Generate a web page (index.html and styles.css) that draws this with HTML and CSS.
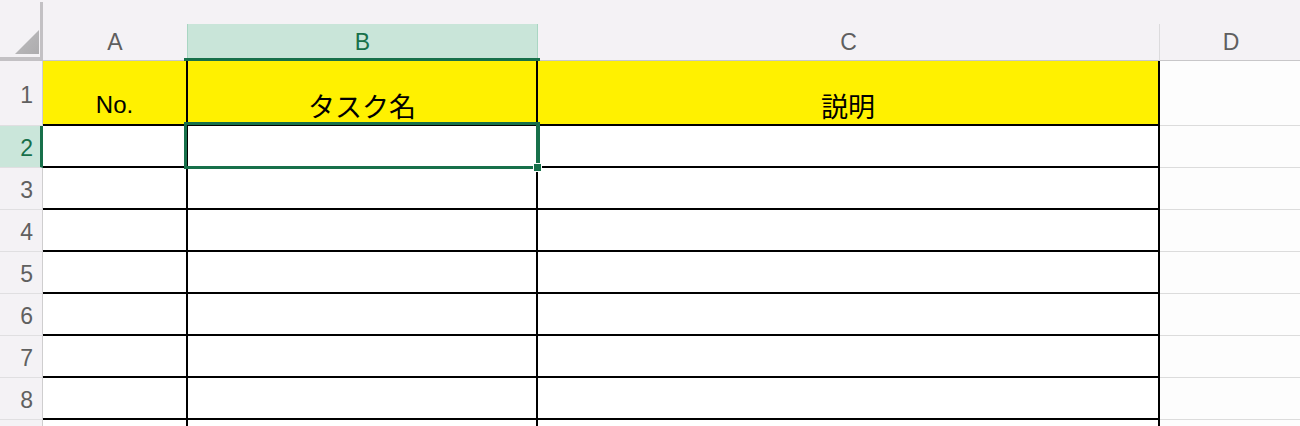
FILE: index.html
```html
<!DOCTYPE html>
<html lang="ja">
<head>
<meta charset="utf-8">
<title>Sheet</title>
<link rel="stylesheet" href="styles.css">
</head>
<body>
<div class="sheet">
  <div class="corner"><div class="tri"></div></div>
  <div class="ch">A</div>
  <div class="ch sel">B</div>
  <div class="ch">C</div>
  <div class="ch">D</div>

  <div class="rh">1</div>
  <div class="c yel"><span class="lat">No.</span></div>
  <div class="c yel"><span class="jp">タスク名</span></div>
  <div class="c yel"><span class="jp">説明</span></div>
  <div class="d"></div>

  <div class="rh sel">2</div>
  <div class="c"></div>
  <div class="c active"><div class="selbox"></div><div class="handle"></div></div>
  <div class="c"></div>
  <div class="d"></div>

  <div class="rh">3</div>
  <div class="c"></div><div class="c"></div><div class="c"></div><div class="d"></div>
  <div class="rh">4</div>
  <div class="c"></div><div class="c"></div><div class="c"></div><div class="d"></div>
  <div class="rh">5</div>
  <div class="c"></div><div class="c"></div><div class="c"></div><div class="d"></div>
  <div class="rh">6</div>
  <div class="c"></div><div class="c"></div><div class="c"></div><div class="d"></div>
  <div class="rh">7</div>
  <div class="c"></div><div class="c"></div><div class="c"></div><div class="d"></div>
  <div class="rh">8</div>
  <div class="c"></div><div class="c"></div><div class="c"></div><div class="d"></div>
  <div class="rh"></div>
  <div class="c"></div><div class="c"></div><div class="c"></div><div class="d"></div>
</div>
</body>
</html>
```
FILE: styles.css
```css
html, body {
  margin: 0;
  padding: 0;
  width: 1300px;
  height: 426px;
  overflow: hidden;
  background: #f4f2f5;
}

.sheet {
  display: grid;
  grid-template-columns: 43px 145px 350px 622px 143px;
  grid-template-rows: 61px 65px repeat(8, 42px);
  font-family: "Liberation Sans", "Noto Sans CJK JP", sans-serif;
}

/* corner */
.corner {
  margin-top: 2px;
  border-right: 3px solid #c3c1c4;
  border-bottom: 4px solid #c3c1c4;
  display: flex;
  align-items: flex-end;
  justify-content: flex-end;
  padding: 0 1px 3px 0;
}
.tri {
  width: 24px;
  height: 24px;
  background: linear-gradient(135deg, #e6e5e7 0%, #b6b5b7 45%, #adacae 100%);
  clip-path: polygon(100% 0, 100% 100%, 0 100%);
}

/* column headers */
.ch {
  margin-top: 24px;
  border-right: 1px solid #dcdbdd;
  border-bottom: 1px solid #c8c7c9;
  display: flex;
  align-items: center;
  justify-content: center;
  font-size: 23px;
  color: #5f5f5f;
  position: relative;
}
.ch.sel {
  background: #c9e5d9;
  color: #17704a;
  border-bottom: 0;
  border-right-color: #a9d6c3;
  box-shadow: -1px 0 0 #a9d6c3;
  padding-bottom: 1px;
  z-index: 2;
}
.ch.sel::after {
  content: "";
  position: absolute;
  left: -4px;
  right: -3px;
  bottom: 0;
  height: 3px;
  background: #17704a;
}

/* row headers */
.rh {
  border-right: 1px solid #cfcecf;
  border-bottom: 1px solid #e0dfe1;
  display: flex;
  align-items: center;
  justify-content: flex-end;
  padding: 4px 9px 0 0;
  font-size: 23px;
  color: #606060;
}
.rh.sel {
  background: #cae6da;
  color: #17704a;
  border-right: 3px solid #17704a;
  padding-right: 7px;
}

/* cells */
.c {
  background: #fff;
  border-right: 2px solid #000;
  border-bottom: 2px solid #000;
  display: flex;
  align-items: flex-end;
  justify-content: center;
  position: relative;
}
.c.yel {
  background: #fff100;
}
.c.active {
  z-index: 3;
}
.d {
  background: #fdfdfd;
  border-bottom: 1px solid #dcdcdc;
}

.lat {
  font-size: 24px;
  line-height: 1;
  color: #000;
  padding-bottom: 7px;
}
.jp {
  font-family: "Noto Sans CJK JP", sans-serif;
  font-size: 27px;
  line-height: 1;
  color: #000;
  padding-bottom: 5px;
}

/* active selection */
.selbox {
  position: absolute;
  left: -4px;
  top: -4px;
  width: 356px;
  height: 47px;
  box-sizing: border-box;
  border: 3px solid #17704a;
  border-right-width: 4px;
}
.handle {
  position: absolute;
  right: -6px;
  bottom: -6px;
  width: 7px;
  height: 7px;
  background: #17704a;
  border: 1px solid #fff;
}
```
